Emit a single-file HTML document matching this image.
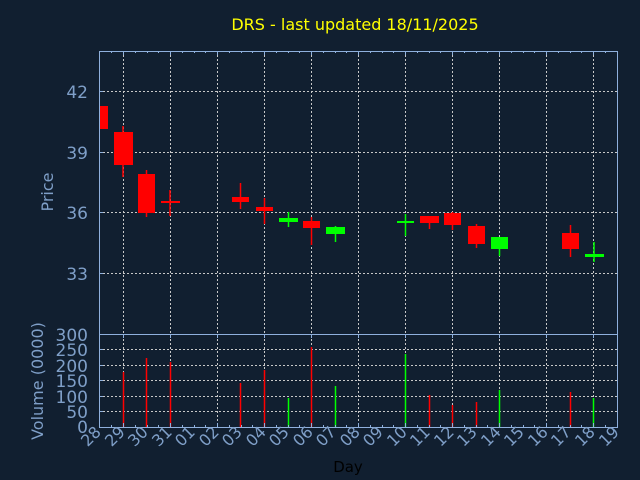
<!DOCTYPE html>
<html><head><style>
html,body{margin:0;padding:0;background:#111f30;}
svg{display:block}
text{font-family:"DejaVu Sans","Liberation Sans",sans-serif;}
</style></head><body>
<svg width="640" height="480" viewBox="0 0 640 480" xmlns="http://www.w3.org/2000/svg">
<rect width="640" height="480" fill="#111f30"/>
<text x="355" y="30" fill="#ffff00" font-size="16" text-anchor="middle" font-family="Liberation Sans, sans-serif">DRS - last updated 18/11/2025</text>
<g stroke="#c8c8c8" stroke-dasharray="2,2" stroke-width="1">
<line x1="123.5" y1="51" x2="123.5" y2="427"/><line x1="170.5" y1="51" x2="170.5" y2="427"/>
<line x1="217.5" y1="51" x2="217.5" y2="427"/><line x1="264.5" y1="51" x2="264.5" y2="427"/>
<line x1="311.5" y1="51" x2="311.5" y2="427"/><line x1="358.5" y1="51" x2="358.5" y2="427"/>
<line x1="405.5" y1="51" x2="405.5" y2="427"/><line x1="452.5" y1="51" x2="452.5" y2="427"/>
<line x1="499.5" y1="51" x2="499.5" y2="427"/><line x1="546.5" y1="51" x2="546.5" y2="427"/>
<line x1="593.5" y1="51" x2="593.5" y2="427"/>
<line x1="99" y1="91.5" x2="617" y2="91.5"/><line x1="99" y1="152.5" x2="617" y2="152.5"/>
<line x1="99" y1="212.5" x2="617" y2="212.5"/><line x1="99" y1="273.5" x2="617" y2="273.5"/>
<line x1="99" y1="349.5" x2="617" y2="349.5"/><line x1="99" y1="365.5" x2="617" y2="365.5"/>
<line x1="99" y1="380.5" x2="617" y2="380.5"/><line x1="99" y1="396.5" x2="617" y2="396.5"/>
<line x1="99" y1="411.5" x2="617" y2="411.5"/>
</g>
<g fill="#ff0000" stroke="#ff0000" stroke-width="1.5">
<rect x="100" y="106" width="8" height="23" stroke="none"/>
<line x1="123" y1="126" x2="123" y2="177"/><rect x="114" y="132" width="19" height="33" stroke="none"/>
<line x1="146.5" y1="170" x2="146.5" y2="217"/><rect x="138" y="174" width="17" height="39" stroke="none"/>
<line x1="170" y1="190" x2="170" y2="216"/><rect x="161" y="201" width="19" height="2" stroke="none"/>
<line x1="240.5" y1="183" x2="240.5" y2="209"/><rect x="232" y="197" width="17" height="5" stroke="none"/>
<line x1="264.5" y1="198" x2="264.5" y2="224"/><rect x="256" y="207" width="17" height="4" stroke="none"/>
<line x1="311.5" y1="217" x2="311.5" y2="245"/><rect x="303" y="221" width="17" height="7" stroke="none"/>
<line x1="429.5" y1="216" x2="429.5" y2="229"/><rect x="420" y="216" width="19" height="7" stroke="none"/>
<line x1="452.5" y1="212" x2="452.5" y2="230"/><rect x="444" y="213" width="17" height="12" stroke="none"/>
<line x1="476.5" y1="224" x2="476.5" y2="248"/><rect x="468" y="226" width="17" height="18" stroke="none"/>
<line x1="570.5" y1="225" x2="570.5" y2="257"/><rect x="562" y="233" width="17" height="16" stroke="none"/>
</g>
<g fill="#00ff00" stroke="#00ff00" stroke-width="1.5">
<line x1="288.5" y1="212" x2="288.5" y2="227"/><rect x="279" y="218" width="19" height="4" stroke="none"/>
<line x1="335.5" y1="226" x2="335.5" y2="242"/><rect x="326" y="227" width="19" height="7" stroke="none"/>
<line x1="405.5" y1="214" x2="405.5" y2="236"/><rect x="397" y="221" width="17" height="2" stroke="none"/>
<line x1="499.5" y1="237" x2="499.5" y2="256"/><rect x="491" y="237" width="17" height="12" stroke="none"/>
<line x1="594" y1="242" x2="594" y2="262"/><rect x="585" y="254" width="19" height="3" stroke="none"/>
</g>
<g stroke="#ff0000" stroke-width="1.5">
<line x1="123.5" y1="372" x2="123.5" y2="427"/><line x1="146.5" y1="358" x2="146.5" y2="427"/>
<line x1="170.5" y1="362" x2="170.5" y2="427"/><line x1="240.5" y1="383" x2="240.5" y2="427"/>
<line x1="264.5" y1="370" x2="264.5" y2="427"/><line x1="311.5" y1="347" x2="311.5" y2="427"/>
<line x1="429.5" y1="395" x2="429.5" y2="427"/><line x1="452.5" y1="405" x2="452.5" y2="427"/>
<line x1="476.5" y1="402" x2="476.5" y2="427"/><line x1="570.5" y1="392" x2="570.5" y2="427"/>
</g>
<g stroke="#00ff00" stroke-width="1.5">
<line x1="288.5" y1="398" x2="288.5" y2="427"/><line x1="335.5" y1="386" x2="335.5" y2="427"/>
<line x1="405.5" y1="354" x2="405.5" y2="427"/><line x1="499.5" y1="390" x2="499.5" y2="427"/>
<line x1="593.5" y1="398" x2="593.5" y2="427"/>
</g>
<g stroke="#8fb0dd" stroke-width="1" fill="none">
<rect x="99.5" y="51.5" width="518" height="283"/>
<rect x="99.5" y="334.5" width="518" height="93"/>
</g>
<g stroke="#8fb0dd" stroke-width="1">
<path d="M123.5 51v4M170.5 51v4M217.5 51v4M264.5 51v4M311.5 51v4M358.5 51v4M405.5 51v4M452.5 51v4M499.5 51v4M546.5 51v4M593.5 51v4
M123.5 334v4M170.5 334v4M217.5 334v4M264.5 334v4M311.5 334v4M358.5 334v4M405.5 334v4M452.5 334v4M499.5 334v4M546.5 334v4M593.5 334v4
M123.5 427v-4M170.5 427v-4M217.5 427v-4M264.5 427v-4M311.5 427v-4M358.5 427v-4M405.5 427v-4M452.5 427v-4M499.5 427v-4M546.5 427v-4M593.5 427v-4
M99 91.5h4M99 152.5h4M99 212.5h4M99 273.5h4M99 349.5h4M99 365.5h4M99 380.5h4M99 396.5h4M99 411.5h4"/>
<path d="M111.5 51v2M135.5 51v2M147.5 51v2M158.5 51v2M182.5 51v2M194.5 51v2M205.5 51v2M229.5 51v2M241.5 51v2M252.5 51v2M276.5 51v2M288.5 51v2M299.5 51v2M323.5 51v2M335.5 51v2M346.5 51v2M370.5 51v2M382.5 51v2M393.5 51v2M417.5 51v2M429.5 51v2M440.5 51v2M464.5 51v2M476.5 51v2M487.5 51v2M511.5 51v2M523.5 51v2M534.5 51v2M558.5 51v2M570.5 51v2M581.5 51v2M605.5 51v2
M111.5 427v-2M135.5 427v-2M147.5 427v-2M158.5 427v-2M182.5 427v-2M194.5 427v-2M205.5 427v-2M229.5 427v-2M241.5 427v-2M252.5 427v-2M276.5 427v-2M288.5 427v-2M299.5 427v-2M323.5 427v-2M335.5 427v-2M346.5 427v-2M370.5 427v-2M382.5 427v-2M393.5 427v-2M417.5 427v-2M429.5 427v-2M440.5 427v-2M464.5 427v-2M476.5 427v-2M487.5 427v-2M511.5 427v-2M523.5 427v-2M534.5 427v-2M558.5 427v-2M570.5 427v-2M581.5 427v-2M605.5 427v-2"/>
</g>
<g fill="#7f9fc8" font-size="17" text-anchor="end">
<text x="88" y="98">42</text><text x="88" y="159">39</text><text x="88" y="219">36</text><text x="88" y="280">33</text>
<text x="88" y="341">300</text><text x="88" y="356">250</text><text x="88" y="372">200</text><text x="88" y="387">150</text>
<text x="88" y="403">100</text><text x="88" y="418">50</text><text x="88" y="433">0</text>
</g>
<text transform="translate(53,192) rotate(-90)" fill="#7f9fc8" font-size="16" text-anchor="middle">Price</text>
<text transform="translate(43,381) rotate(-90)" fill="#7f9fc8" font-size="16" text-anchor="middle">Volume (0000)</text>
<text x="348" y="472" fill="#000000" font-size="15" text-anchor="middle">Day</text>
<g fill="#7f9fc8" font-size="16" text-anchor="end">
<text transform="translate(102,433) rotate(-45)">28</text>
<text transform="translate(126,433) rotate(-45)">29</text>
<text transform="translate(149,433) rotate(-45)">30</text>
<text transform="translate(173,433) rotate(-45)">31</text>
<text transform="translate(196,433) rotate(-45)">01</text>
<text transform="translate(220,433) rotate(-45)">02</text>
<text transform="translate(243,433) rotate(-45)">03</text>
<text transform="translate(267,433) rotate(-45)">04</text>
<text transform="translate(290,433) rotate(-45)">05</text>
<text transform="translate(314,433) rotate(-45)">06</text>
<text transform="translate(337,433) rotate(-45)">07</text>
<text transform="translate(361,433) rotate(-45)">08</text>
<text transform="translate(384,433) rotate(-45)">09</text>
<text transform="translate(408,433) rotate(-45)">10</text>
<text transform="translate(431,433) rotate(-45)">11</text>
<text transform="translate(455,433) rotate(-45)">12</text>
<text transform="translate(478,433) rotate(-45)">13</text>
<text transform="translate(502,433) rotate(-45)">14</text>
<text transform="translate(525,433) rotate(-45)">15</text>
<text transform="translate(549,433) rotate(-45)">16</text>
<text transform="translate(572,433) rotate(-45)">17</text>
<text transform="translate(596,433) rotate(-45)">18</text>
<text transform="translate(620,433) rotate(-45)">19</text>
</g>
</svg>
</body></html>
